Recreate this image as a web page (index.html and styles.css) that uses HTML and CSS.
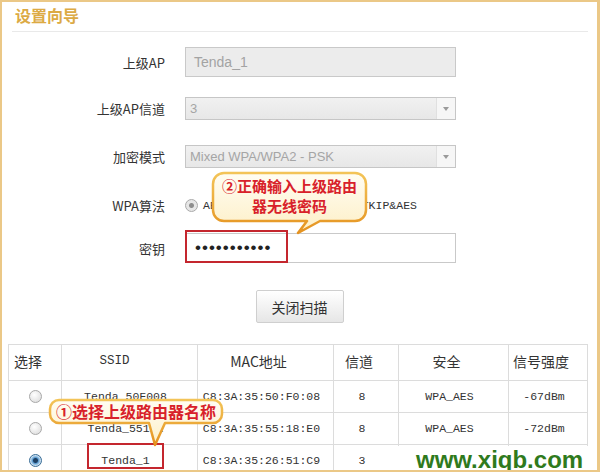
FILE: index.html
```html
<!DOCTYPE html>
<html lang="zh-CN">
<head>
    <meta charset="UTF-8">
    <title>设置向导</title>
    <link rel="stylesheet" href="styles.css">
</head>
<body>

<div class="frame">
    <h1 class="title">设置向导</h1>

    <!-- 上级AP设置 -->
    <div class="form">
        <div class="row row-1">
            <label class="label">上级AP</label>
            <div class="field"><div class="input input-disabled">Tenda_1</div></div>
        </div>
        <div class="row row-2">
            <label class="label">上级AP信道</label>
            <div class="field">
                <div class="select"><span class="select-text">3</span><span class="select-arrow"></span></div>
            </div>
        </div>
        <div class="row row-3">
            <label class="label">加密模式</label>
            <div class="field">
                <div class="select"><span class="select-text">Mixed WPA/WPA2 - PSK</span><span class="select-arrow"></span></div>
            </div>
        </div>
        <div class="row row-4">
            <label class="label">WPA算法</label>
            <div class="field radios">
                <span class="radio radio-grey on"></span><span class="mono">AES</span>
                <span class="radio radio-grey gap"></span><span class="mono">TKIP&amp;AES</span>
            </div>
        </div>
        <div class="row row-5">
            <label class="label">密钥</label>
            <div class="field"><input class="input input-pass" type="password" value="12345678901"></div>
        </div>
    </div>

    <div class="actions">
        <button class="btn">关闭扫描</button>
    </div>

    <!-- 扫描结果 -->
    <table class="scan">
        <colgroup>
            <col style="width:53px"><col style="width:136px"><col style="width:136px">
            <col style="width:65px"><col style="width:110px"><col style="width:79px">
        </colgroup>
        <thead>
            <tr>
                <th class="th-first">选择</th>
                <th class="mono-head">SSID</th>
                <th>MAC地址</th>
                <th>信道</th>
                <th>安全</th>
                <th>信号强度</th>
            </tr>
        </thead>
        <tbody>
            <tr>
                <td><span class="radio"></span></td>
                <td>Tenda_50F008</td>
                <td>C8:3A:35:50:F0:08</td>
                <td>8</td>
                <td>WPA_AES</td>
                <td>-67dBm</td>
            </tr>
            <tr>
                <td><span class="radio"></span></td>
                <td>Tenda_5518E</td>
                <td>C8:3A:35:55:18:E0</td>
                <td>8</td>
                <td>WPA_AES</td>
                <td>-72dBm</td>
            </tr>
            <tr>
                <td><span class="radio checked"></span></td>
                <td>Tenda_1</td>
                <td>C8:3A:35:26:51:C9</td>
                <td>3</td>
                <td></td>
                <td></td>
            </tr>
        </tbody>
    </table>

    <!-- 标注 -->
    <div class="mark mark-pass"></div>
    <div class="mark mark-ssid"></div>

    <div class="callout callout-2">
        <svg class="bubble" width="164" height="68" viewBox="0 0 164 68">
            <defs>
                <linearGradient id="fill2" x1="0" y1="0" x2="0" y2="1">
                    <stop offset="0" stop-color="#fffdf3"/>
                    <stop offset="1" stop-color="#fdefc6"/>
                </linearGradient>
                <linearGradient id="line2" x1="0" y1="0" x2="0" y2="1">
                    <stop offset="0" stop-color="#f3c458"/>
                    <stop offset="1" stop-color="#e5921f"/>
                </linearGradient>
            </defs>
            <path d="M14,3 H145 A11,11 0 0 1 156,14 V40 A11,11 0 0 1 145,51 H110 L88,63 L97,51 H14 A11,11 0 0 1 3,40 V14 A11,11 0 0 1 14,3 Z"
                  fill="url(#fill2)" stroke="url(#line2)" stroke-width="2.5" stroke-linejoin="round"/>
        </svg>
        <div class="callout-text">②正确输入上级路由<br>器无线密码</div>
    </div>

    <div class="callout callout-1">
        <svg class="bubble" width="180" height="52" viewBox="0 0 180 52">
            <defs>
                <linearGradient id="fill1" x1="0" y1="0" x2="0" y2="1">
                    <stop offset="0" stop-color="#fffdf3"/>
                    <stop offset="1" stop-color="#fdefc6"/>
                </linearGradient>
                <linearGradient id="line1" x1="0" y1="0" x2="0" y2="1">
                    <stop offset="0" stop-color="#f3c458"/>
                    <stop offset="1" stop-color="#e5921f"/>
                </linearGradient>
            </defs>
            <path d="M12,3 H166 A9,9 0 0 1 175,12 V17 A9,9 0 0 1 166,26 H118 L108,48 L102,26 H12 A9,9 0 0 1 3,17 V12 A9,9 0 0 1 12,3 Z"
                  fill="url(#fill1)" stroke="url(#line1)" stroke-width="2.5" stroke-linejoin="round"/>
        </svg>
        <div class="callout-text">①选择上级路由器名称</div>
    </div>

    <div class="watermark">www.xiqb.com</div>
</div>

</body>
</html>
```

FILE: styles.css
```css
body {
    margin: 0;
    background-color: #fff;
    font-family: "Noto Sans CJK SC", "Liberation Sans", sans-serif;
}
.frame {
    position: relative;
    width: 600px;
    height: 472px;
    box-sizing: border-box;
    border: 2px solid #ebc887;
    border-right-width: 3px;
    background-color: #fff;
    overflow: hidden;
}
.title {
    margin: 0 9px 0 10px;
    padding-left: 3px;
    height: 29px;
    line-height: 26px;
    font-size: 16px;
    font-weight: bold;
    color: #dcaa44;
    border-bottom: 1px solid #e9e9e9;
}

/* form rows */
.row {
    display: flex;
    align-items: center;
}
.row-1 { height: 44px; margin-top: 8px; }
.row-2 { height: 48px; }
.row-3 { height: 48px; }
.row-4 { height: 50px; }
.row-5 { height: 36px; }
.label {
    width: 163px;
    text-align: right;
    font-size: 13px;
    color: #333;
}
.field {
    margin-left: 20px;
    width: 271px;
}
.input {
    display: block;
    width: 271px;
    height: 30px;
    box-sizing: border-box;
    border: 1px solid #c9c9c9;
    padding: 0 8px;
    line-height: 28px;
    font-family: "Liberation Sans", sans-serif;
    font-size: 14px;
}
.input-disabled {
    background-color: #ececec;
    color: #a3a3a3;
}
.input-pass {
    background-color: #fff;
    color: #222;
    font-size: 17px;
    letter-spacing: 1px;
    padding-left: 9px;
    outline: none;
}
.select {
    display: flex;
    align-items: center;
    height: 23px;
    box-sizing: border-box;
    border: 1px solid #c6c6c6;
    background: linear-gradient(#f1f1f1, #e7e7e7);
    color: #a5a5a5;
    font-family: "Liberation Sans", sans-serif;
    font-size: 13px;
}
.select-text {
    flex: 1;
    padding-left: 4px;
}
.select-arrow {
    width: 18px;
    height: 21px;
    border-left: 1px solid #e0e0e0;
    background-color: #f6f6f6;
    position: relative;
}
.select-arrow::after {
    content: "";
    position: absolute;
    left: 6px;
    top: 9px;
    border-left: 3px solid transparent;
    border-right: 3px solid transparent;
    border-top: 4px solid #9a9a9a;
}
.radios {
    display: flex;
    align-items: center;
    font-size: 11.5px;
    color: #333;
}
.mono, .scan td, .mono-head {
    font-family: "Liberation Mono", monospace;
}
.radios .mono {
    margin-left: 5px;
}
.radio-grey.gap {
    margin-left: 120px;
}

/* radio buttons */
.radio {
    display: inline-block;
    width: 11px;
    height: 11px;
    border-radius: 50%;
    border: 1px solid #a9a9a9;
    background: radial-gradient(circle at 40% 35%, #ffffff, #d8d8d8);
    vertical-align: middle;
}
.radio-grey.on {
    background: radial-gradient(circle, #8d8d8d 0 2px, #e6e6e6 3px);
}
.radio.checked {
    border-color: #3a6d96;
    background: radial-gradient(circle, #1c3f63 0 2px, #5b9bd0 3px, #c7def0 5px);
}

.actions {
    display: flex;
    justify-content: center;
    margin-top: 24px;
}
.btn {
    width: 88px;
    height: 33px;
    border: 1px solid #cfcfcf;
    border-radius: 2px;
    background: linear-gradient(#ffffff, #e6e6e6);
    font-family: "Noto Sans CJK SC", sans-serif;
    font-size: 14px;
    color: #333;
    cursor: pointer;
}

/* scan table */
.scan {
    margin: 21px 0 0 6px;
    width: 579px;
    border-collapse: collapse;
    table-layout: fixed;
    color: #333;
}
.scan th, .scan td {
    border: 1px solid #dcdcdc;
    text-align: center;
    padding: 0 8px 0 0;
}
.scan th {
    height: 32px;
    font-weight: normal;
    font-size: 14px;
    padding-right: 14px;
    padding-bottom: 3px;
}
.scan th.th-first {
    text-align: left;
    padding-left: 5px;
}
.scan th.mono-head {
    font-size: 12.5px;
    padding-right: 30px;
}
.scan td {
    height: 31px;
    font-size: 11.5px;
}
.scan td:first-child {
    padding: 0;
}

/* annotations */
.mark {
    position: absolute;
    box-sizing: border-box;
    border: 2px solid #c4262e;
}
.mark-pass {
    left: 183px;
    top: 228px;
    width: 103px;
    height: 33px;
}
.mark-ssid {
    left: 85px;
    top: 441px;
    width: 77px;
    height: 26px;
}
.callout {
    position: absolute;
}
.bubble {
    display: block;
}
.callout-text {
    position: absolute;
    left: 3px;
    top: 3px;
    text-align: center;
    font-weight: bold;
    color: #d8212a;
}
.callout-2 {
    left: 208px;
    top: 168px;
}
.callout-2 .callout-text {
    width: 153px;
    padding-top: 3px;
    font-size: 15px;
    line-height: 20px;
}
.callout-1 {
    left: 45px;
    top: 395px;
}
.callout-1 .callout-text {
    width: 172px;
    font-size: 16px;
    line-height: 23px;
}
.watermark {
    position: absolute;
    left: 396px;
    top: 444px;
    width: 204px;
    height: 28px;
    padding-left: 18px;
    box-sizing: border-box;
    background-color: #fff;
    font-family: "Liberation Sans", sans-serif;
    font-weight: bold;
    font-size: 24px;
    line-height: 27px;
    color: #2f7a1d;
}
```
